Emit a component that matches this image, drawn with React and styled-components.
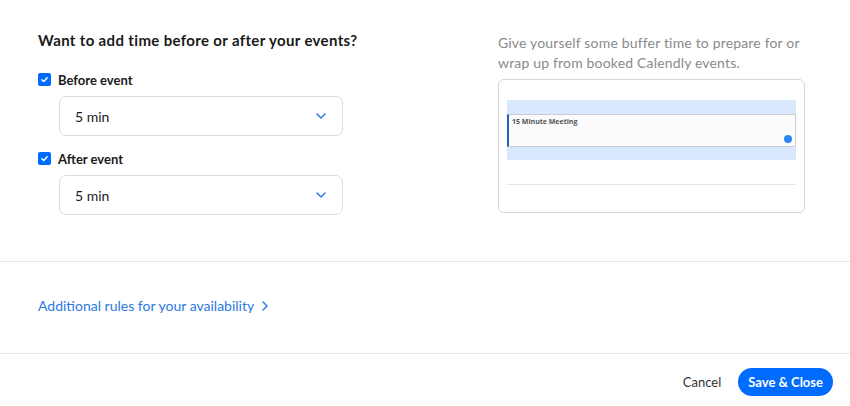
import React from "react";
import styled, { createGlobalStyle } from "styled-components";

const Global = createGlobalStyle`
  html, body { margin: 0; padding: 0; background: #fff; }
  body { font-family: "Lato", "Noto Sans", sans-serif; color: #1a1a1a; -webkit-font-smoothing: antialiased; }
  * { box-sizing: border-box; }
`;

const Page = styled.div`
  width: 850px;
  height: 406px;
  display: flex;
  flex-direction: column;
  overflow: hidden;
`;

const Top = styled.section`
  display: grid;
  grid-template-columns: 460px 307px;
  padding: 31px 0 0 38px;
  height: 262px;
  border-bottom: 1px solid #e6e6e6;
`;

const Left = styled.div`
  display: flex;
  flex-direction: column;
`;

const Title = styled.h2`
  margin: 0 0 24px;
  font-size: 15px;
  font-weight: 700;
  letter-spacing: 0.35px;
  line-height: 18px;
  color: #1a1a1a;
`;

const CheckRow = styled.label`
  display: flex;
  align-items: center;
  gap: 7px;
  font-size: 13px;
  font-weight: 700;
  height: 13px;
  margin-bottom: ${(p) => p.$mb}px;
`;

const Box = styled.span`
  width: 13px;
  height: 13px;
  border-radius: 2px;
  background: #006bff;
  display: flex;
  align-items: center;
  justify-content: center;
`;

const Select = styled.div`
  margin-left: 21px;
  width: 284px;
  height: 40px;
  border: 1px solid #d9dee6;
  border-radius: 7px;
  display: flex;
  align-items: center;
  justify-content: space-between;
  padding: 0 16px 0 15px;
  font-size: 14px;
  color: #1a1a1a;
  margin-bottom: ${(p) => p.$mb}px;
`;

const Right = styled.div`
  display: flex;
  flex-direction: column;
`;

const Hint = styled.p`
  margin: 2px 0 0;
  font-size: 14px;
  letter-spacing: 0.17px;
  line-height: 20px;
  color: #8a8a8a;
`;

const Card = styled.div`
  margin-top: 6px;
  height: 134px;
  border: 1px solid #d6d6d6;
  border-radius: 6px;
  padding: 20px 8px 0 8px;
`;

const Band = styled.div`
  height: 60px;
  background: #d9e8fc;
  padding-top: 14px;
`;

const Event = styled.div`
  position: relative;
  height: 33px;
  background: #fbfbfb;
  border: 1px solid #c9ccd1;
  border-left: 2px solid #1f5fc4;
  padding: 2px 0 0 3px;
  font-family: "Open Sans", sans-serif;
  font-size: 7px;
  font-weight: 700;
  color: #555;
`;

const Dot = styled.span`
  position: absolute;
  right: 3px;
  bottom: 3px;
  width: 8px;
  height: 8px;
  border-radius: 50%;
  background: #2e86f0;
`;

const Line = styled.div`
  margin-top: 24px;
  height: 1px;
  background: #e4e4e4;
`;

const Middle = styled.section`
  height: 92px;
  border-bottom: 1px solid #e6e6e6;
  display: flex;
  align-items: center;
  padding: 0 0 4px 38px;
`;

const Link = styled.a`
  display: flex;
  align-items: center;
  gap: 8px;
  color: #2b78e4;
  font-size: 14px;
  text-decoration: none;
  cursor: pointer;
`;

const Footer = styled.footer`
  flex: 1;
  display: flex;
  align-items: center;
  justify-content: flex-end;
  gap: 17px;
  padding: 3px 17px 0 0;
`;

const Cancel = styled.button`
  border: none;
  background: none;
  font-family: inherit;
  font-size: 13px;
  color: #333;
  padding: 0;
`;

const Primary = styled.button`
  border: none;
  background: #006bff;
  color: #fff;
  font-family: inherit;
  font-weight: 700;
  font-size: 13px;
  height: 28px;
  padding: 0 10px;
  border-radius: 14px;
`;

const Check = () => (
  <svg width="9" height="9" viewBox="0 0 10 10">
    <path d="M2 5.2 L4.2 7.2 L8 3" fill="none" stroke="#fff" strokeWidth="1.6" strokeLinecap="round" strokeLinejoin="round" />
  </svg>
);

const Chevron = () => (
  <svg width="10" height="6" viewBox="0 0 10 6">
    <path d="M1 1 L5 5 L9 1" fill="none" stroke="#2b78e4" strokeWidth="1.5" strokeLinecap="round" strokeLinejoin="round" />
  </svg>
);

const ChevronRight = () => (
  <svg width="6" height="10" viewBox="0 0 6 10">
    <path d="M1 1 L5 5 L1 9" fill="none" stroke="#2b78e4" strokeWidth="1.4" strokeLinecap="round" strokeLinejoin="round" />
  </svg>
);

export default function App() {
  return (
    <>
      <Global />
      <Page>
        <Top>
          <Left>
            <Title>Want to add time before or after your events?</Title>
            <CheckRow $mb={10}>
              <Box><Check /></Box>
              Before event
            </CheckRow>
            <Select $mb={16}>
              <span>5 min</span>
              <Chevron />
            </Select>
            <CheckRow $mb={10}>
              <Box><Check /></Box>
              After event
            </CheckRow>
            <Select $mb={0}>
              <span>5 min</span>
              <Chevron />
            </Select>
          </Left>
          <Right>
            <Hint>
              Give yourself some buffer time to prepare for or
              <br />
              wrap up from booked Calendly events.
            </Hint>
            <Card>
              <Band>
                <Event>
                  15 Minute Meeting
                  <Dot />
                </Event>
              </Band>
              <Line />
            </Card>
          </Right>
        </Top>
        <Middle>
          <Link>
            Additional rules for your availability
            <ChevronRight />
          </Link>
        </Middle>
        <Footer>
          <Cancel>Cancel</Cancel>
          <Primary>Save &amp; Close</Primary>
        </Footer>
      </Page>
    </>
  );
}
